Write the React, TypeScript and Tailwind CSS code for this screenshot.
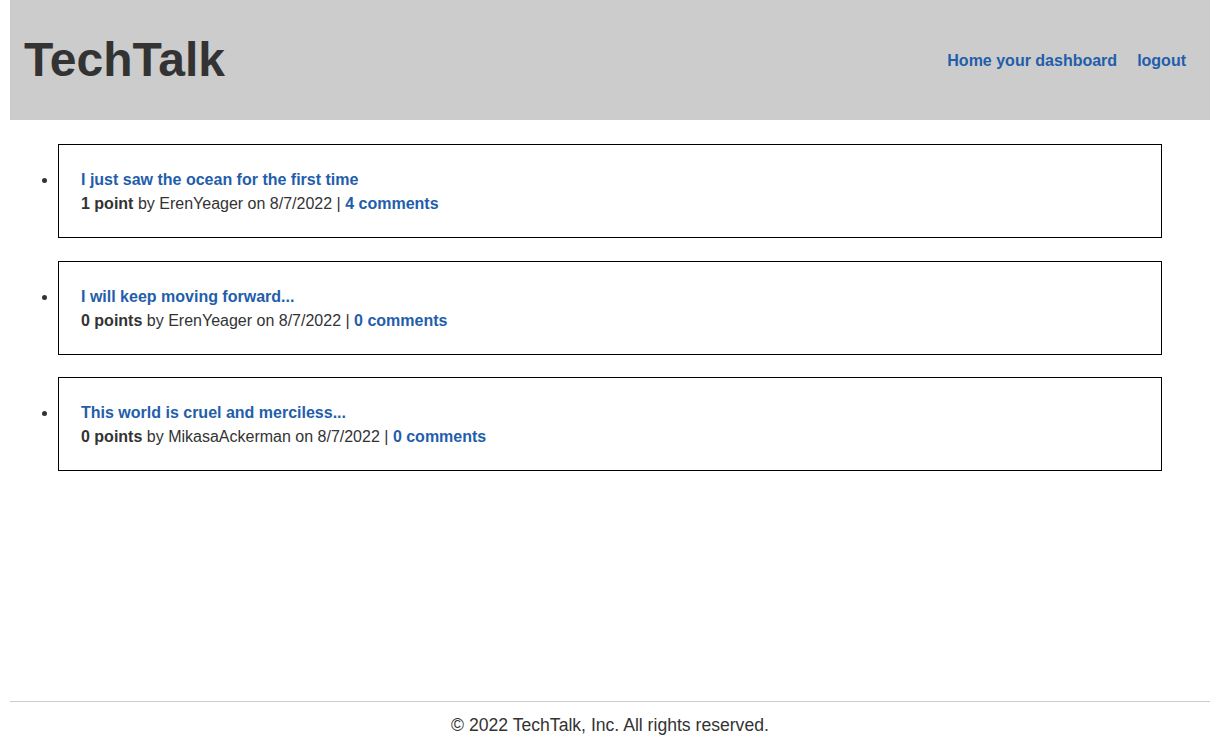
import React from "react";

const posts = [
  { title: "I just saw the ocean for the first time", points: "1 point", user: "ErenYeager", date: "8/7/2022", comments: "4 comments" },
  { title: "I will keep moving forward...", points: "0 points", user: "ErenYeager", date: "8/7/2022", comments: "0 comments" },
  { title: "This world is cruel and merciless...", points: "0 points", user: "MikasaAckerman", date: "8/7/2022", comments: "0 comments" },
];

export default function App() {
  return (
    <div
      className="min-h-screen max-w-[1220px] flex flex-col px-[10px] bg-white text-[#333] text-[16px] leading-[24px]"
      style={{ fontFamily: '"Liberation Sans", Arial, sans-serif' }}
    >
      <header className="h-[120px] bg-[#cccccc] flex items-center justify-between pl-[14px] pr-[24px] pt-[2px]">
        <h1 className="text-[48px] leading-none font-bold text-[#333] mt-[-2px]">TechTalk</h1>
        <nav className="flex items-center gap-[20px] font-bold text-[#1f5eab]">
          <a href="#">Home your dashboard</a>
          <a href="#">logout</a>
        </nav>
      </header>
      <main className="flex-1">
        <ul className="list-disc pl-[48px] pr-[48px] mt-[24px] marker:text-[#333]">
          {posts.map((p, i) => (
            <li key={i} className="mb-[22.5px]">
              <div className="border border-black px-[22px] pt-[23px] pb-[21px]">
                <a href="#" className="block font-bold text-[#1f5eab]">{p.title}</a>
                <div>
                  <span className="font-bold">{p.points}</span> by {p.user} on {p.date} |{" "}
                  <a href="#" className="font-bold text-[#1f5eab]">{p.comments}</a>
                </div>
              </div>
            </li>
          ))}
        </ul>
      </main>
      <footer className="border-t border-[#cccccc] pt-[11px] pb-[7px] text-center text-[17.6px] leading-[24px] text-[#333]">
        © 2022 TechTalk, Inc. All rights reserved.
      </footer>
    </div>
  );
}
